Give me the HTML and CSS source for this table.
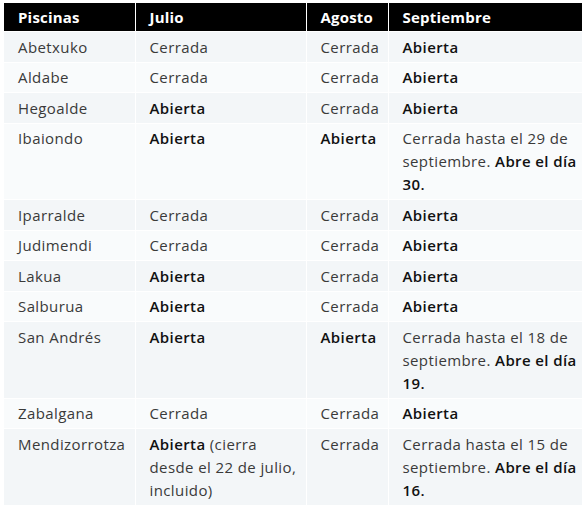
FILE: index.html
```html
<!DOCTYPE html>
<html lang="es">
<head>
<meta charset="utf-8">
<title>Piscinas</title>
<link rel="stylesheet" href="styles.css">
</head>
<body>
<table class="pools">
  <colgroup>
    <col class="c1"><col class="c2"><col class="c3"><col class="c4">
  </colgroup>
  <thead>
    <tr><th>Piscinas</th><th>Julio</th><th>Agosto</th><th>Septiembre</th></tr>
  </thead>
  <tbody>
    <tr><td>Abetxuko</td><td>Cerrada</td><td>Cerrada</td><td><b>Abierta</b></td></tr>
    <tr><td>Aldabe</td><td>Cerrada</td><td>Cerrada</td><td><b>Abierta</b></td></tr>
    <tr><td>Hegoalde</td><td><b>Abierta</b></td><td>Cerrada</td><td><b>Abierta</b></td></tr>
    <tr><td>Ibaiondo</td><td><b>Abierta</b></td><td><b>Abierta</b></td><td>Cerrada hasta el 29 de septiembre. <b>Abre el día 30.</b></td></tr>
    <tr><td>Iparralde</td><td>Cerrada</td><td>Cerrada</td><td><b>Abierta</b></td></tr>
    <tr><td>Judimendi</td><td>Cerrada</td><td>Cerrada</td><td><b>Abierta</b></td></tr>
    <tr><td>Lakua</td><td><b>Abierta</b></td><td>Cerrada</td><td><b>Abierta</b></td></tr>
    <tr><td>Salburua</td><td><b>Abierta</b></td><td>Cerrada</td><td><b>Abierta</b></td></tr>
    <tr><td>San Andrés</td><td><b>Abierta</b></td><td><b>Abierta</b></td><td>Cerrada hasta el 18 de septiembre. <b>Abre el día 19.</b></td></tr>
    <tr><td>Zabalgana</td><td>Cerrada</td><td>Cerrada</td><td><b>Abierta</b></td></tr>
    <tr><td>Mendizorrotza</td><td><b>Abierta</b> (cierra desde el 22 de julio, incluido)</td><td>Cerrada</td><td>Cerrada hasta el 15 de septiembre. <b>Abre el día 16.</b></td></tr>
  </tbody>
</table>
</body>
</html>
```
FILE: styles.css
```css
html, body {
  margin: 0;
  padding: 0;
  background: #ffffff;
}
body {
  padding: 3px 4px;
  font-family: "Open Sans", "Liberation Sans", sans-serif;
  font-size: 15px;
  letter-spacing: 0.4px;
  color: #3a3a3a;
}
.pools {
  width: 578px;
  border-collapse: collapse;
  table-layout: fixed;
}
.c1 { width: 131px; }
.c2 { width: 171px; }
.c3 { width: 82px; }
.c4 { width: 194px; }
.pools th,
.pools td {
  text-align: left;
  vertical-align: top;
  padding: 3.5px 4px 3px 14px;
  line-height: 23px;
  border: 1px solid #ffffff;
}
.pools th {
  background: #000000;
  color: #ffffff;
  font-weight: 700;
  letter-spacing: 0.2px;
  height: 22px;
  padding-top: 3px;
  line-height: 22px;
  border-top: 0;
  border-bottom: 0;
}
.pools th:first-child,
.pools td:first-child { border-left: 0; }
.pools th:last-child,
.pools td:last-child { border-right: 0; }
.pools tbody tr:nth-child(odd) td { background: #f3f6f8; }
.pools tbody tr:nth-child(even) td { background: #f9fbfc; }
.pools b {
  font-weight: 600;
  color: #111111;
}
```
